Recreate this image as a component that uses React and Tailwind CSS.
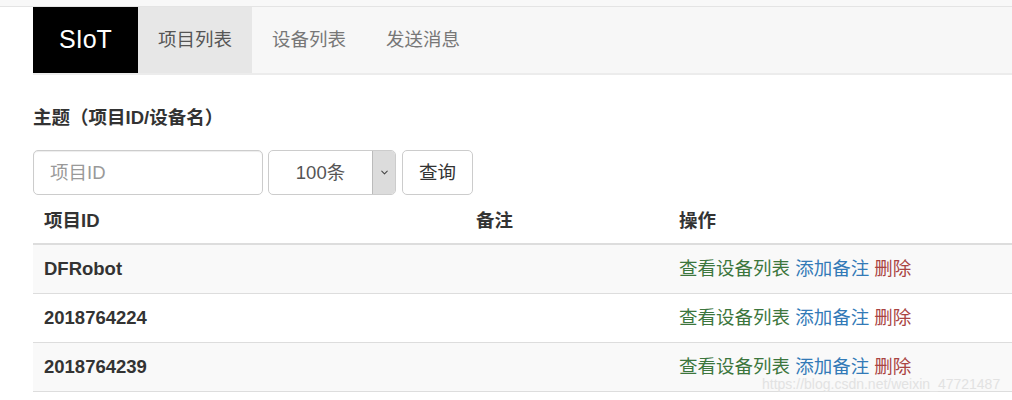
import { ChevronDown } from "lucide-react";

const rows = [
    { id: "DFRobot", note: "" },
    { id: "2018764224", note: "" },
    { id: "2018764239", note: "" },
];

const navItems = ["项目列表", "设备列表", "发送消息"];

const App = () => {
    return (
        <div className="relative w-[1012px] h-[400px] overflow-hidden bg-white text-[#333] font-['Liberation_Sans','Noto_Sans_CJK_SC',sans-serif]">
            <div className="h-[7px] bg-[#f8f8f8] border-b border-[#e4e4e4]"></div>

            <div className="pl-[33px]">
                {/* navbar */}
                <nav className="flex h-[68px] bg-[#f7f7f7] border-b-2 border-[#ececec]">
                    <div className="w-[105px] bg-black text-white text-[25px] flex items-center justify-center">
                        SIoT
                    </div>
                    {navItems.map((item, i) => (
                        <div
                            key={item}
                            className={
                                i === 0
                                    ? "w-[114px] bg-[#e7e7e7] text-[#555] text-[18.5px] flex items-center justify-center"
                                    : "w-[114px] text-[#777] text-[18.5px] flex items-center justify-center"
                            }
                        >
                            {item}
                        </div>
                    ))}
                </nav>

                <h4 className="mt-[32px] text-[18.5px] font-bold leading-[22px]">主题（项目ID/设备名）</h4>

                {/* search form */}
                <div className="flex gap-[5px] mt-[21px]">
                    <input
                        type="text"
                        placeholder="项目ID"
                        className="w-[230px] h-[45px] px-[16px] border border-[#ccc] rounded-[5px] text-[18.5px] placeholder:text-[#999] shadow-[inset_0_1px_1px_rgba(0,0,0,0.075)] outline-none"
                    />
                    <div className="flex w-[128px] h-[45px] border border-[#ccc] rounded-[5px] overflow-hidden">
                        <div className="flex-1 flex items-center justify-center text-[18.5px] text-[#555]">100条</div>
                        <div className="w-[23px] bg-[#dcdcdc] border-l border-[#bbb] flex items-center justify-center text-[#444]">
                            <ChevronDown size={11} strokeWidth={2.2} />
                        </div>
                    </div>
                    <button className="ml-[1px] w-[71px] h-[45px] border border-[#ccc] rounded-[5px] bg-white text-[18.5px] text-[#333]">
                        查询
                    </button>
                </div>

                {/* table */}
                <table className="mt-[4px] w-[1100px] border-collapse text-[18.5px]">
                    <thead>
                        <tr className="border-b-2 border-[#ddd]">
                            <th className="w-[432px] h-[45px] px-[11px] text-left font-bold">项目ID</th>
                            <th className="w-[203px] px-[11px] text-left font-bold">备注</th>
                            <th className="px-[11px] text-left font-bold">操作</th>
                        </tr>
                    </thead>
                    <tbody>
                        {rows.map((row, i) => (
                            <tr key={row.id} className={i % 2 === 0 ? "bg-[#f9f9f9] border-b border-[#ddd]" : "bg-white border-b border-[#ddd]"}>
                                <td className="h-[49px] px-[11px] font-bold">{row.id}</td>
                                <td className="px-[11px]">{row.note}</td>
                                <td className="px-[11px]">
                                    <span className="text-[#3c763d]">查看设备列表</span>{" "}
                                    <span className="text-[#337ab7]">添加备注</span>{" "}
                                    <span className="text-[#a94442]">删除</span>
                                </td>
                            </tr>
                        ))}
                    </tbody>
                </table>
            </div>

            <div className="absolute left-[762px] top-[374px] text-[14px] text-[#e2e2e2]">
                https://blog.csdn.net/weixin_47721487
            </div>
        </div>
    );
};

export default App;
